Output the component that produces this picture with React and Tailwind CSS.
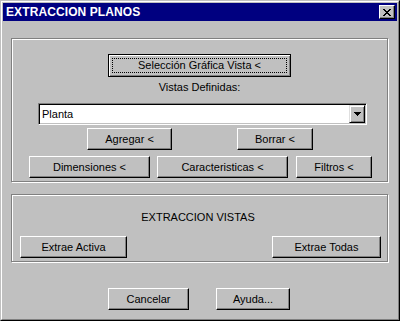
// App.jsx — diálogo "EXTRACCION PLANOS" estilo Windows 95
import React from "react";

const FONT = "font-['Liberation_Sans',Arial,sans-serif]";

// botón 3D clásico
function Btn({ className = "", children }) {
  return (
    <div
      className={`h-[22px] flex items-center justify-center border border-t-white border-l-white border-r-black border-b-black shadow-[inset_-1px_-1px_0_#808080] text-[11px] leading-[13px] text-black ${className}`}
    >
      {children}
    </div>
  );
}

// cuadro de grupo (borde grabado)
function GroupBox({ className = "", children }) {
  return (
    <div
      className={`ml-[8px] w-[377px] border border-[#808080] shadow-[inset_1px_1px_0_#fff,1px_1px_0_#fff] ${className}`}
    >
      {children}
    </div>
  );
}

function CloseGlyph() {
  // X de 8x7 píxeles
  const rows = [
    "11000011",
    "01100110",
    "00111100",
    "00011000",
    "00111100",
    "01100110",
    "11000011",
  ];
  return (
    <svg width="8" height="7" shapeRendering="crispEdges">
      {rows.map((r, y) =>
        r.split("").map((c, x) =>
          c === "1" ? <rect key={`${x}-${y}`} x={x} y={y} width="1" height="1" fill="#000" /> : null
        )
      )}
    </svg>
  );
}

function DownArrow() {
  return (
    <svg width="7" height="4" shapeRendering="crispEdges">
      <rect x="0" y="0" width="7" height="1" fill="#000" />
      <rect x="1" y="1" width="5" height="1" fill="#000" />
      <rect x="2" y="2" width="3" height="1" fill="#000" />
      <rect x="3" y="3" width="1" height="1" fill="#000" />
    </svg>
  );
}

export default function App() {
  return (
    <div className={`w-[400px] h-[321px] bg-[#c0c0c0] ${FONT} text-black`}>
      {/* marco de la ventana */}
      <div className="w-full h-full border border-t-[#c0c0c0] border-l-[#c0c0c0] border-r-black border-b-black">
        <div className="w-full h-full border border-t-white border-l-white border-r-[#808080] border-b-[#808080] p-[1px]">
          {/* barra de título */}
          <div className="h-[18px] bg-[#000080] flex items-center justify-between pl-[3px] pr-[2px]">
            <span className="text-white font-bold text-[12px] leading-[14px] tracking-[0.1px]">
              EXTRACCION PLANOS
            </span>
            <div className="w-[16px] h-[14px] flex items-center justify-center bg-[#c0c0c0] border border-t-white border-l-white border-r-black border-b-black shadow-[inset_-1px_-1px_0_#808080] pr-[1px]">
              <CloseGlyph />
            </div>
          </div>

          {/* grupo superior */}
          <GroupBox className="mt-[17px] h-[144px]">
            <div className="flex flex-col">
              <div className="self-center mt-[15px] w-[183px] h-[23px] border border-black shadow-[inset_1px_1px_0_#fff,inset_-1px_-1px_0_#808080] p-[3px]">
                <div className="w-full h-full border border-dotted border-black flex items-center justify-center text-[11px] leading-[13px]">
                  Selección Gráfica Vista &lt;
                </div>
              </div>

              <div className="self-center mt-[4px] text-[11px] leading-[13px]">
                Vistas Definidas:
              </div>

              {/* combo */}
              <div className="ml-[26px] mt-[9px] w-[329px] h-[22px] bg-white border border-t-[#808080] border-l-[#808080] border-r-white border-b-white shadow-[inset_1px_1px_0_#000,inset_-1px_-1px_0_#c0c0c0] p-[1px] flex">
                <div className="flex-1 flex items-center pl-[2px] text-[11px] leading-[13px]">
                  Planta
                </div>
                <div className="w-[16px] h-full bg-[#c0c0c0] flex items-center justify-center border border-t-[#dfdfdf] border-l-[#dfdfdf] border-r-black border-b-black shadow-[inset_1px_1px_0_#fff,inset_-1px_-1px_0_#808080]">
                  <DownArrow />
                </div>
              </div>

              <div className="flex mt-[3px] ml-[75px] gap-[65px]">
                <Btn className="w-[85px]">Agregar &lt;</Btn>
                <Btn className="w-[76px]">Borrar &lt;</Btn>
              </div>

              <div className="flex mt-[6px] ml-[17px]">
                <Btn className="w-[121px]">Dimensiones &lt;</Btn>
                <Btn className="w-[131px] ml-[7px]">Caracteristicas &lt;</Btn>
                <Btn className="w-[76px] ml-[8px]">Filtros &lt;</Btn>
              </div>
            </div>
          </GroupBox>

          {/* grupo inferior */}
          <GroupBox className="mt-[12px] h-[68px]">
            <div className="flex flex-col">
              <div className="self-center mt-[16px] text-[11px] leading-[13px] pr-[3px]">
                EXTRACCION VISTAS
              </div>
              <div className="flex justify-between mt-[12px] pl-[8px] pr-[6px]">
                <Btn className="w-[107px]">Extrae Activa</Btn>
                <Btn className="w-[109px]">Extrae Todas</Btn>
              </div>
            </div>
          </GroupBox>

          {/* botones finales */}
          <div className="flex mt-[26px] pl-[105px] gap-[27px]">
            <Btn className="w-[81px]">Cancelar</Btn>
            <Btn className="w-[74px]">Ayuda...</Btn>
          </div>
        </div>
      </div>
    </div>
  );
}
